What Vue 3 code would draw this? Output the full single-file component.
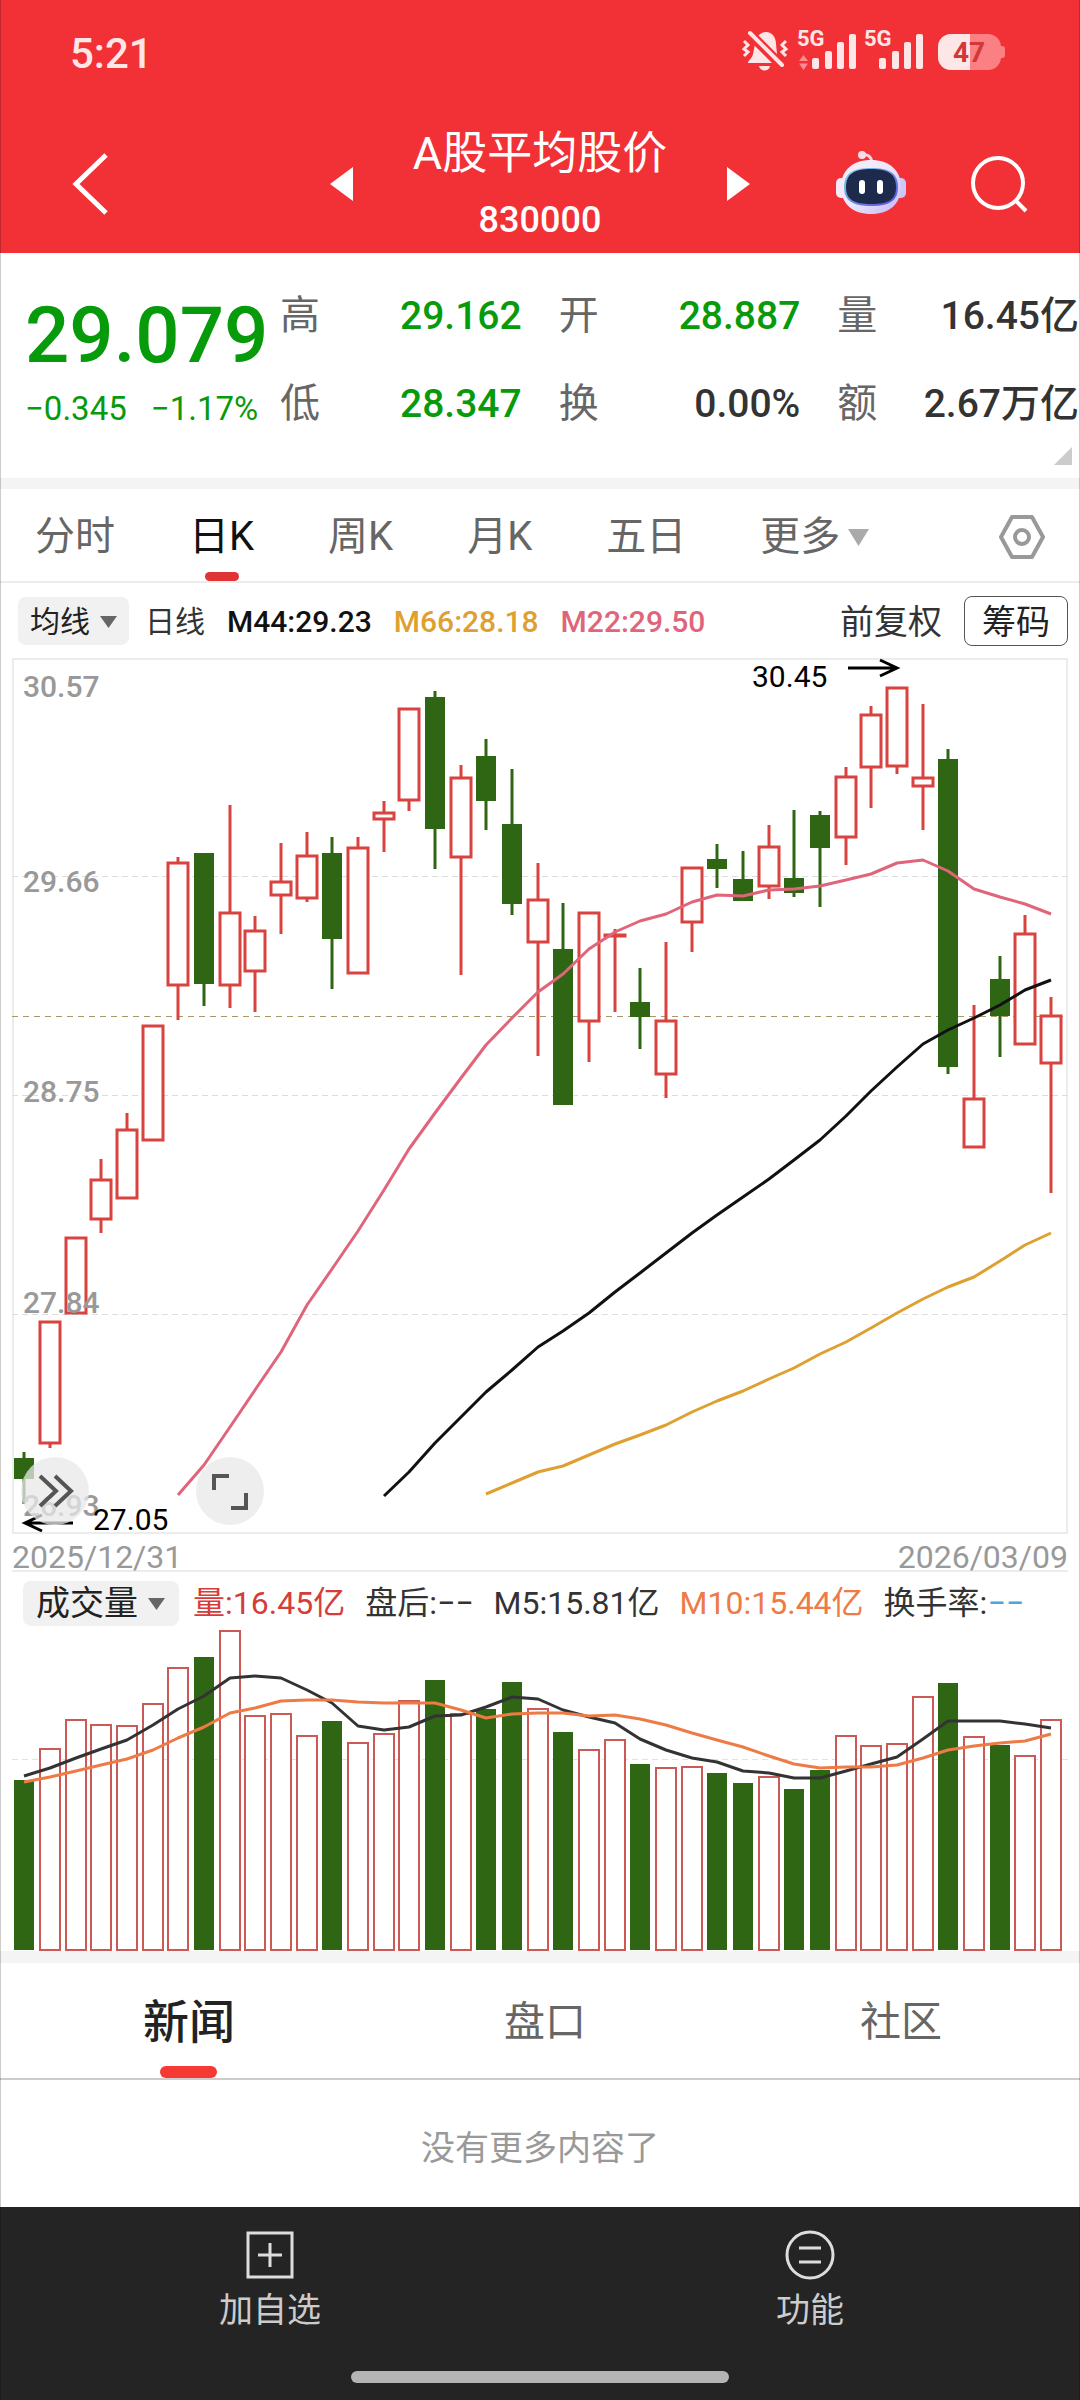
<script setup>
import { computed, ref } from 'vue'

const periods = ['分时', '日K', '周K', '月K', '五日']
const activePeriod = ref('日K')
const sections = ['新闻', '盘口', '社区']
const activeSection = ref('新闻')

const stats = [
  { label: '高', value: '29.162', down: true },
  { label: '开', value: '28.887', down: true },
  { label: '量', value: '16.45亿', down: false },
  { label: '低', value: '28.347', down: true },
  { label: '换', value: '0.00%', down: false },
  { label: '额', value: '2.67万亿', down: false },
]

// x centre of the trading day with the given index
const dayX = (i) => Math.round(24.2 + i * 25.67)

// [rising, wick top, body top, body bottom, wick bottom, volume bar top]
const days = [
  [0, 1452, 1458, 1479, 1504, 1780],
  [1, 1322, 1322, 1443, 1448, 1749],
  [1, 1238, 1238, 1313, 1313, 1720],
  [1, 1159, 1180, 1219, 1233, 1725],
  [1, 1113, 1130, 1198, 1198, 1726],
  [1, 1025, 1026, 1140, 1140, 1704],
  [1, 857, 863, 985, 1020, 1668],
  [0, 853, 853, 984, 1006, 1657],
  [1, 805, 913, 985, 1008, 1631],
  [1, 916, 931, 971, 1012, 1716],
  [1, 843, 882, 895, 934, 1714],
  [1, 832, 856, 898, 902, 1736],
  [0, 837, 853, 939, 989, 1721],
  [1, 837, 848, 973, 973, 1743],
  [1, 801, 813, 819, 852, 1734],
  [1, 709, 709, 800, 811, 1701],
  [0, 691, 697, 829, 869, 1680],
  [1, 765, 778, 857, 975, 1714],
  [0, 739, 756, 801, 830, 1709],
  [0, 769, 824, 904, 915, 1682],
  [1, 863, 900, 942, 1056, 1709],
  [0, 903, 949, 1105, 1105, 1732],
  [1, 913, 913, 1021, 1062, 1750],
  [1, 929, 935, 936, 1012, 1740],
  [0, 968, 1002, 1017, 1049, 1764],
  [1, 942, 1021, 1074, 1098, 1768],
  [1, 868, 868, 922, 952, 1767],
  [0, 844, 859, 869, 888, 1773],
  [0, 851, 879, 901, 901, 1783],
  [1, 825, 847, 886, 899, 1777],
  [0, 810, 878, 893, 897, 1789],
  [0, 811, 815, 848, 907, 1770],
  [1, 767, 777, 837, 865, 1736],
  [1, 706, 715, 767, 808, 1746],
  [1, 688, 688, 766, 774, 1744],
  [1, 704, 778, 786, 830, 1697],
  [0, 749, 759, 1067, 1074, 1683],
  [1, 1005, 1099, 1147, 1147, 1737],
  [0, 956, 979, 1016, 1057, 1745],
  [1, 915, 934, 1044, 1044, 1756],
  [1, 997, 1016, 1063, 1193, 1720],
].map(([up, high, top, bottom, low, vol], i) => ({ x: dayX(i), up: !!up, high, top, bottom, low, vol }))

const line = (start, ys) => computed(() => ys.map((y, i) => `${dayX(start + i)},${y}`).join(' '))

const m22 = line(6, [1495, 1465, 1427, 1390, 1352, 1305, 1269, 1231, 1190, 1149, 1113, 1078, 1045, 1018, 992, 974, 949, 932, 921, 914, 902, 895, 896, 890, 889, 886, 880, 874, 863, 860, 871, 889, 897, 904, 914])
const m44 = line(14, [1496, 1472, 1443, 1417, 1392, 1370, 1347, 1331, 1313, 1292, 1273, 1253, 1233, 1215, 1197, 1179, 1160, 1140, 1116, 1091, 1067, 1044, 1030, 1018, 1005, 990, 980])
const m66 = line(18, [1494, 1483, 1472, 1466, 1455, 1444, 1435, 1425, 1412, 1401, 1391, 1379, 1368, 1354, 1342, 1328, 1313, 1299, 1287, 1277, 1261, 1245, 1233])
const vol5 = line(0, [1776, 1768, 1758, 1749, 1740, 1725, 1709, 1696, 1678, 1676, 1678, 1690, 1703, 1726, 1730, 1727, 1716, 1715, 1707, 1697, 1699, 1710, 1717, 1723, 1739, 1750, 1758, 1762, 1771, 1773, 1778, 1778, 1771, 1764, 1757, 1739, 1721, 1721, 1721, 1724, 1728])
const vol10 = line(0, [1782, 1777, 1771, 1765, 1759, 1750, 1738, 1727, 1713, 1708, 1701, 1700, 1700, 1702, 1703, 1703, 1703, 1710, 1718, 1714, 1713, 1713, 1716, 1715, 1719, 1725, 1733, 1740, 1747, 1756, 1764, 1768, 1767, 1767, 1765, 1758, 1750, 1746, 1743, 1741, 1734])

const axis = [
  { text: '30.57', y: 697 },
  { text: '29.66', y: 892 },
  { text: '28.75', y: 1102 },
  { text: '27.84', y: 1313 },
  { text: '26.93', y: 1516 },
]
</script>

<template>
  <div class="app">
    <header class="top">
      <div class="status">
        <span class="clock">5:21</span>
        <svg class="status-icons" viewBox="735 25 275 50" width="275" height="50" aria-hidden="true">
          <g fill="#ffe6e6">
            <path d="M748 63c0-3 4-4 5-9l2-10c1-7 5-12 11-12 6 0 10 5 10 12l1 10c1 5 5 6 5 9z" />
            <path d="M759 66h11c-1 6-10 6-11 0z" />
            <path d="M747 31l36 36" stroke="#f23136" stroke-width="10" fill="none" />
            <path d="M750 33l32 32" stroke="#ffe6e6" stroke-width="4" stroke-linecap="round" fill="none" />
            <path d="M744 41l4 4-4 4 4 3-4 4M786 41l-4 4 4 4-4 3 4 4" stroke="#ffe6e6" stroke-width="3" fill="none" />
            <g v-for="dx in [0, 67]" :key="dx" :transform="`translate(${dx} 0)`">
              <text x="797" y="46" class="net">5G</text>
              <rect x="812" y="58" width="7" height="11" rx="2" />
              <rect x="825" y="51" width="7" height="18" rx="2" />
              <rect x="837" y="42" width="7" height="27" rx="2" />
              <rect x="849" y="34" width="7" height="35" rx="2" />
            </g>
          </g>
          <path d="M799 61l4.500-6 4.500 6zM799 63.500h9l-4.500 6.500z" fill="#fb8c8f" />
          <rect x="998" y="46" width="7" height="12" rx="3" fill="#fa8083" />
          <rect x="938" y="34" width="63" height="36" rx="13" fill="#fa8083" />
          <path d="M970 34h-19a13 13 0 0 0-13 13v10a13 13 0 0 0 13 13h19z" fill="#ffe6e6" />
          <text x="953" y="62" class="charge">47</text>
        </svg>
      </div>

      <div class="nav">
        <button class="icon-btn back" aria-label="返回">
          <svg viewBox="0 0 38 64" width="38" height="64"><path d="M34 3L4 32l30 29" fill="none" stroke="#fff" stroke-width="5" /></svg>
        </button>
        <div class="switcher">
          <button class="icon-btn" aria-label="上一个">
            <svg viewBox="0 0 23 34" width="23" height="34"><path d="M23 0v34L0 17z" fill="#fff" /></svg>
          </button>
          <h1 class="title">
            <span class="name">A股平均股价</span>
            <span class="code">830000</span>
          </h1>
          <button class="icon-btn" aria-label="下一个">
            <svg viewBox="0 0 23 34" width="23" height="34"><path d="M0 0v34l23-17z" fill="#fff" /></svg>
          </button>
        </div>
        <div class="tools">
          <button class="icon-btn" aria-label="智能助手">
            <svg viewBox="835 148 70 70" width="70" height="70">
              <defs>
                <linearGradient id="shell" x1="0" y1="0" x2="1" y2="1">
                  <stop offset="0" stop-color="#ffeef4" />
                  <stop offset="0.500" stop-color="#ece6fb" />
                  <stop offset="1" stop-color="#c3b6f5" />
                </linearGradient>
                <linearGradient id="rim" x1="0" y1="0" x2="1" y2="1">
                  <stop offset="0" stop-color="#7fd9ea" />
                  <stop offset="1" stop-color="#5a48d6" />
                </linearGradient>
              </defs>
              <path d="M861 154c7-1 9 2 10 7" fill="none" stroke="#fbd3de" stroke-width="3" />
              <circle cx="861" cy="154" r="4" fill="#fcdbe5" />
              <rect x="835" y="177" width="12" height="20" rx="5" fill="#f3e9f8" />
              <rect x="893" y="177" width="12" height="20" rx="5" fill="#cfc5f6" />
              <path d="M870 159c18 0 30 10 30 27s-12 27-30 27-30-10-30-27 12-27 30-27z" fill="url(#shell)" />
              <path d="M870 167c18 0 27 5 27 19s-9 19-27 19-27-5-27-19 9-19 27-19z" fill="url(#rim)" />
              <path d="M870 168c17 0 25 5 25 18s-8 17-25 17-25-4-25-17 8-18 25-18z" fill="#1d2a4b" />
              <rect x="858" y="179" width="6" height="14" rx="3" fill="#fff" />
              <rect x="876" y="179" width="6" height="14" rx="3" fill="#fff" />
            </svg>
          </button>
          <button class="icon-btn" aria-label="搜索">
            <svg viewBox="0 0 58 58" width="58" height="58"><g fill="none" stroke="#fff" stroke-width="4"><circle cx="28" cy="28" r="25" /><path d="M45 45l11 11" /></g></svg>
          </button>
        </div>
      </div>
    </header>

    <section class="quote">
      <div class="price">
        <strong class="last">29.079</strong>
        <p class="change"><span>−0.345</span><span>−1.17%</span></p>
      </div>
      <dl class="stats">
        <div v-for="s in stats" :key="s.label" class="stat">
          <dt>{{ s.label }}</dt>
          <dd :class="{ down: s.down }">{{ s.value }}</dd>
        </div>
      </dl>
      <svg class="corner" viewBox="0 0 18 18" width="18" height="18"><path d="M18 0v18H0z" fill="#ccc" /></svg>
    </section>

    <nav class="periods">
      <button
        v-for="p in periods"
        :key="p"
        class="period"
        :class="{ active: p === activePeriod }"
        @click="activePeriod = p"
      >{{ p }}</button>
      <button class="period more">更多<svg viewBox="0 0 21 17" width="21" height="17"><path d="M0 0h21L10.500 17z" fill="#aaa" /></svg></button>
      <button class="icon-btn gear" aria-label="设置">
        <svg viewBox="0 0 46 46" width="46" height="46"><g fill="none" stroke="#999" stroke-width="4" stroke-linejoin="round"><path d="M13 3h20l11 20-11 20H13L2 23z" /><circle cx="23" cy="23" r="7" /></g></svg>
      </button>
    </nav>

    <div class="averages">
      <button class="chip">均线<svg viewBox="0 0 17 12" width="17" height="12"><path d="M0 0h17L8.500 12z" fill="#666" /></svg></button>
      <span class="kind">日线</span>
      <span class="ma ma44">M44:29.23</span>
      <span class="ma ma66">M66:28.18</span>
      <span class="ma ma22">M22:29.50</span>
      <button class="plain">前复权</button>
      <button class="outlined">筹码</button>
    </div>

    <section class="charts">
      <div class="candle-box">
        <svg class="plot" viewBox="12 658 1056 876" role="img" aria-label="日K线">
          <rect x="13" y="659" width="1054" height="874" fill="none" stroke="#ececec" stroke-width="2" />
          <g stroke="#dcdcdc" stroke-dasharray="6 4">
            <path d="M12 876.500h1056M12 1095.500h1056M12 1314.500h1056" />
          </g>
          <path d="M12 1016.500h1056" stroke="#a89868" stroke-dasharray="6 5" />
          <g v-for="d in days" :key="d.x">
            <path
              :d="`M${d.x} ${d.high}V${d.low}`"
              :stroke="d.up ? '#d8433f' : '#2f6614'"
              stroke-width="3"
            />
            <rect
              v-if="d.up"
              :x="d.x - 10"
              :y="d.top"
              width="20"
              :height="d.bottom - d.top"
              fill="#fff"
              stroke="#d8433f"
              stroke-width="3"
            />
            <rect v-else :x="d.x - 10" :y="d.top" width="20" :height="d.bottom - d.top" fill="#2f6614" />
          </g>
          <g fill="none" stroke-width="3" stroke-linejoin="round">
            <polyline :points="m66" stroke="#dea030" />
            <polyline :points="m44" stroke="#111" />
            <polyline :points="m22" stroke="#e0657a" />
          </g>
          <g class="axis">
            <text v-for="a in axis" :key="a.text" x="23" :y="a.y">{{ a.text }}</text>
          </g>
          <g class="extreme">
            <text x="752" y="687">30.45</text>
            <text x="93" y="1530">27.05</text>
          </g>
          <g fill="none" stroke="#000" stroke-width="3">
            <path d="M848 668h48M880 660l17 8-17 8" />
            <path d="M73 1523H26M42 1515l-17 8 17 8" />
          </g>
        </svg>
        <button class="round shift" aria-label="移动">
          <svg viewBox="0 0 68 68" width="68" height="68"><path d="M19 19l16 15-16 15M34 19l16 15-16 15" fill="none" stroke="#555" stroke-width="4" /></svg>
        </button>
        <button class="round expand" aria-label="全屏">
          <svg viewBox="0 0 68 68" width="68" height="68"><path d="M18 33V19h15M35 51h15V36" fill="none" stroke="#555" stroke-width="4" /></svg>
        </button>
      </div>

      <div class="dates"><time>2025/12/31</time><time>2026/03/09</time></div>

      <div class="volume-box">
        <div class="legend">
          <button class="chip">成交量<svg viewBox="0 0 17 12" width="17" height="12"><path d="M0 0h17L8.500 12z" fill="#666" /></svg></button>
          <span class="vol">量:16.45亿</span>
          <span>盘后:−−</span>
          <span>M5:15.81亿</span>
          <span class="m10">M10:15.44亿</span>
          <span>换手率:<span class="none">−−</span></span>
        </div>
        <svg class="plot" viewBox="12 1629 1056 322" role="img" aria-label="成交量">
          <path d="M12 1759.500h1056" stroke="#e2e2e2" stroke-dasharray="6 4" />
          <g v-for="d in days" :key="d.x">
            <rect
              v-if="d.up"
              :x="d.x - 10"
              :y="d.vol"
              width="20"
              :height="1950 - d.vol"
              fill="#fff"
              stroke="#cb5a56"
              stroke-width="2"
            />
            <rect v-else :x="d.x - 10" :y="d.vol" width="20" :height="1950 - d.vol" fill="#2f6614" />
          </g>
          <g fill="none" stroke-width="3" stroke-linejoin="round">
            <polyline :points="vol5" stroke="#333" />
            <polyline :points="vol10" stroke="#ee7a45" />
          </g>
        </svg>
      </div>
    </section>

    <nav class="sections">
      <button
        v-for="s in sections"
        :key="s"
        class="section-tab"
        :class="{ active: s === activeSection }"
        @click="activeSection = s"
      >{{ s }}</button>
    </nav>
    <p class="empty">没有更多内容了</p>

    <footer class="bottom">
      <div class="actions">
        <button class="action">
          <svg viewBox="0 0 50 50" width="50" height="50"><path d="M3 3h44v44H3zM25 13v24M13 25h24" fill="none" stroke="#ddd" stroke-width="3" /></svg>
          加自选
        </button>
        <button class="action">
          <svg viewBox="0 0 50 50" width="50" height="50"><g fill="none" stroke="#ddd" stroke-width="3"><circle cx="25" cy="25" r="23" /><path d="M14 18h22M14 32h22" /></g></svg>
          功能
        </button>
      </div>
      <div class="home-bar"></div>
    </footer>
  </div>
</template>

<style>
body {
  margin: 0;
  background: #242424;
}
</style>

<style scoped>
.app {
  position: relative;
  font-family: Roboto, "Noto Sans CJK SC", sans-serif;
  color: #333;
  background: #fff;
}
.app::after {
  content: "";
  position: absolute;
  inset: 0;
  border: solid rgba(0, 0, 0, 0.2);
  border-width: 0 1px;
  pointer-events: none;
}
button {
  margin: 0;
  padding: 0;
  border: 0;
  background: none;
  font: inherit;
  color: inherit;
}
svg {
  display: block;
}
.icon-btn {
  display: flex;
}

.top {
  background: #f23136;
  color: #fff;
}
.status {
  display: flex;
  justify-content: space-between;
  align-items: flex-start;
  height: 90px;
  padding: 25px 70px 0;
}
.clock {
  font-size: 42px;
  line-height: 58px;
  font-weight: 500;
  color: #ffe6e6;
}
.net {
  font-size: 22px;
  font-weight: 700;
}
.charge {
  font-size: 28px;
  font-weight: 700;
  fill: #d4373a;
}
.nav {
  display: grid;
  grid-template-columns: 1fr auto 1fr;
  align-items: center;
  height: 138px;
}
.back {
  padding-left: 72px;
}
.switcher {
  display: flex;
  align-items: center;
  gap: 60px;
}
.title {
  display: flex;
  flex-direction: column;
  align-items: center;
  margin: 0;
  padding-top: 6px;
  line-height: 66px;
  font-weight: 400;
}
.name {
  font-size: 45px;
}
.code {
  font-size: 36px;
  font-weight: 500;
}
.tools {
  display: flex;
  align-items: center;
  justify-content: flex-end;
  gap: 64px;
  padding-right: 52px;
}

.quote {
  position: relative;
  display: flex;
  padding: 19px 1px 30px 25px;
  border-bottom: 11px solid #f4f4f4;
}
.price {
  flex: 0 0 255px;
  padding-top: 12px;
  color: #079a0b;
}
.last {
  display: block;
  font-size: 78px;
  line-height: 104px;
  font-weight: 500;
}
.change {
  display: flex;
  gap: 24px;
  margin: 0;
  font-size: 33px;
  line-height: 42px;
}
.stats {
  flex: 1;
  display: grid;
  grid-template-columns: repeat(3, 1fr);
  column-gap: 37px;
  margin: 0;
}
.stat {
  display: flex;
  justify-content: space-between;
  font-size: 40px;
  line-height: 88px;
}
.stat dt {
  color: #666;
}
.stat dd {
  margin: 0;
  font-size: 39px;
  font-weight: 500;
  white-space: nowrap;
}
.stat .down {
  color: #079a0b;
}
.corner {
  position: absolute;
  right: 8px;
  bottom: 13px;
}

.periods {
  display: flex;
  gap: 74px;
  padding: 4px 35px 0;
  border-bottom: 2px solid #ececec;
  font-size: 40px;
  line-height: 88px;
  color: #666;
}
.period {
  position: relative;
  white-space: nowrap;
}
.period.active {
  color: #111;
}
.period.active::after {
  content: "";
  position: absolute;
  left: 50%;
  bottom: 0;
  width: 34px;
  height: 9px;
  margin-left: -17px;
  border-radius: 5px;
  background: #e03434;
}
.more {
  display: flex;
  align-items: center;
  gap: 8px;
}
.gear {
  align-items: center;
  margin-left: auto;
}

.averages {
  display: flex;
  align-items: center;
  gap: 22px;
  padding: 13px 12px 12px 18px;
  font-size: 30px;
  line-height: 50px;
}
.chip {
  display: flex;
  align-items: center;
  gap: 10px;
  border-radius: 8px;
  background: #f1f1f1;
  color: #222;
}
.averages .chip {
  padding: 2px 12px 0;
  line-height: 46px;
  margin-right: -6px;
}
.kind,
.ma,
.plain {
  padding-top: 2px;
  line-height: 48px;
}
.ma {
  font-weight: 500;
}
.ma44 {
  color: #111;
}
.ma66 {
  color: #dea030;
}
.ma22 {
  color: #e0657a;
}
.plain {
  margin-left: auto;
  font-size: 34px;
}
.outlined {
  padding: 2px 17px 0;
  border: 1px solid #555;
  border-radius: 8px;
  font-size: 34px;
  line-height: 46px;
  color: #222;
}

.charts {
  padding: 0 12px;
  border-bottom: 12px solid #f4f4f4;
}
.candle-box {
  position: relative;
}
.plot {
  width: 100%;
  height: auto;
  overflow: visible;
}
.axis {
  font-size: 30px;
  font-weight: 500;
  fill: #999;
}
.extreme {
  font-size: 30px;
  fill: #000;
}
.round {
  position: absolute;
  bottom: 9px;
  border-radius: 50%;
  background: rgba(232, 232, 232, 0.75);
}
.shift {
  left: 9px;
}
.expand {
  left: 184px;
}
.dates {
  display: flex;
  justify-content: space-between;
  padding: 10px 0 0;
  font-size: 32px;
  line-height: 26px;
  color: #999;
}
.volume-box {
  border: solid #ececec;
  border-width: 2px 0 0;
}
.legend {
  display: flex;
  align-items: center;
  gap: 20px;
  padding: 9px 11px 3px;
  font-size: 32px;
  line-height: 45px;
  white-space: nowrap;
}
.legend .chip {
  margin-right: -6px;
  padding: 0 14px 0 13px;
  font-size: 34px;
}
.vol {
  color: #d63c3a;
}
.m10 {
  color: #ee7a45;
}
.none {
  color: #4aa8e0;
}

.sections {
  display: flex;
  padding: 4px 1px 0 11px;
  border-bottom: 2px solid #ccc;
  font-size: 41px;
  line-height: 111px;
  color: #666;
}
.section-tab {
  position: relative;
  flex: 1;
}
.section-tab.active {
  font-size: 46px;
  font-weight: 500;
  color: #222;
}
.section-tab.active::after {
  content: "";
  position: absolute;
  left: 50%;
  bottom: 0;
  width: 57px;
  height: 12px;
  margin-left: -29px;
  border-radius: 6px;
  background: #f53a33;
}
.empty {
  margin: 0;
  padding: 44px 0 35px;
  font-size: 34px;
  line-height: 48px;
  text-align: center;
  color: #999;
}

.bottom {
  padding: 23px 0 17px;
  background: #242424;
  color: #ccc;
}
.actions {
  display: flex;
}
.action {
  flex: 1;
  display: flex;
  flex-direction: column;
  align-items: center;
  gap: 8px;
  font-size: 34px;
  line-height: 44px;
}
.home-bar {
  width: 35%;
  height: 12px;
  margin: 39px auto 0;
  border-radius: 6px;
  background: #b5b5b5;
}
</style>
